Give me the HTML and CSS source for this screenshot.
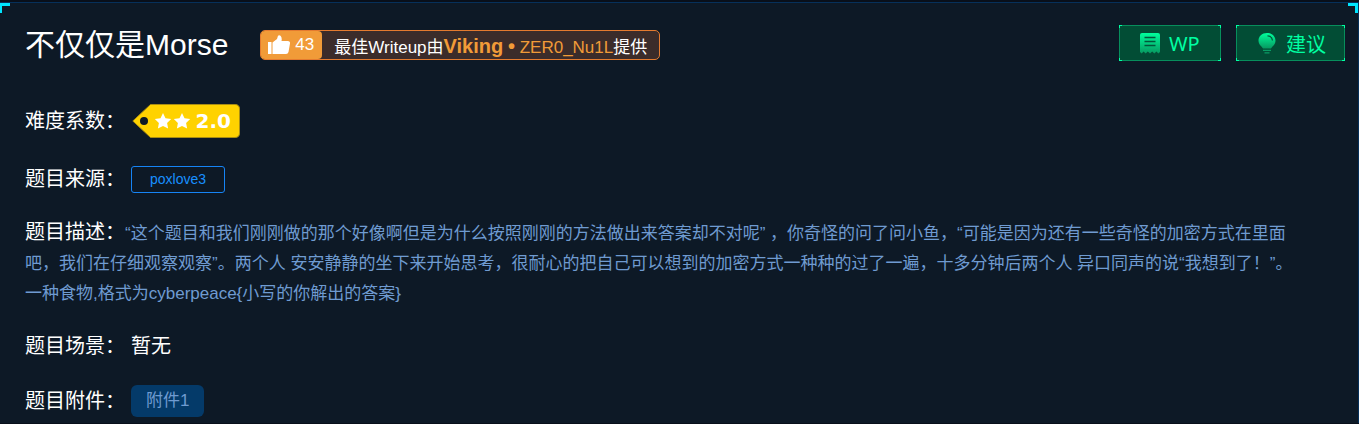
FILE: index.html
```
<!DOCTYPE html>
<html lang="zh-CN">
<head>
  <meta charset="UTF-8">
  <meta name="viewport" content="width=device-width, initial-scale=1.0">
  <title>不仅仅是Morse</title>
  <link rel="stylesheet" href="styles.css">
</head>
<body>
  <main class="panel">
    <header class="panel-header">
      <h1 class="title">不仅仅是Morse</h1>
      <div class="writeup">
        <button class="like" type="button">
          <svg class="like-icon" viewBox="0 0 22 20" aria-hidden="true">
            <path d="M0 7h3.500v12H0z"/>
            <path d="M4.500 7.500L9 4L10 .8Q11.200 -.4 12.500 .8Q14.300 3 13.500 6H20Q22.300 6.300 22 8.500L20.500 17Q20 19 18 19H4.500z"/>
          </svg>
          43
        </button>
        <span class="writeup-text">最佳Writeup由<strong>Viking</strong> <span class="team"><b>•</b> ZER0_Nu1L</span>提供</span>
      </div>
      <div class="actions">
        <button class="action" type="button">
          <svg class="action-icon" viewBox="0 0 20 22" aria-hidden="true">
            <defs>
              <linearGradient id="green" x1="0" y1="0" x2="0" y2="1">
                <stop offset="0" stop-color="#00ff9c"/>
                <stop offset="1" stop-color="#079860"/>
              </linearGradient>
            </defs>
            <path fill="url(#green)" d="M2 1H18Q20 1 20 3V20L18.300 21.500L16.500 19.500L14.300 21.500L12.200 19.500L10 21.500L7.800 19.500L5.700 21.500L3.500 19.500L1.700 21.500L0 20V3Q0 1 2 1z"/>
            <path stroke="#02553a" stroke-width="1.300" d="M4.500 5.500H15.500M4.500 9.500H15.500M4.500 13.500H15.500"/>
          </svg>
          WP
        </button>
        <button class="action" type="button">
          <svg class="action-icon" viewBox="0 0 20 22" aria-hidden="true">
            <path fill="url(#green)" d="M10 1C15 1 18.500 4.500 18.500 8.500C18.500 12.500 16 13.500 14 16.500H6C4 13.500 1.500 12.500 1.500 8.500C1.500 4.500 5 1 10 1z"/>
            <path stroke="#02553a" stroke-width="1.300" fill="none" d="M10.500 3.800Q15 4 15.500 8.500"/>
            <path stroke="#0a9c65" stroke-width="1.300" d="M6 18.300H14M7.500 20.800H12.500"/>
          </svg>
          建议
        </button>
      </div>
    </header>

    <div class="row row-level">
      <span class="label">难度系数：</span>
      <span class="level">
        <svg class="level-tag" viewBox="0 0 109 34" aria-hidden="true">
          <path fill="#ffd200" stroke="#a98d12" d="M19.500 .5H104Q108.500 .5 108.500 5V29Q108.500 33.500 104 33.500H19.500L1.800 17z"/>
          <circle cx="13" cy="17" r="4" fill="#0d1926"/>
          <path id="star" fill="#fff" d="M32 9l2.500 5.200 5.700.8-4.100 4 1 5.600-5.100-2.700-5.100 2.700 1-5.600-4.100-4 5.700-.8z"/>
          <use href="#star" x="19"/>
        </svg>
        <span class="level-value">2.0</span>
      </span>
    </div>

    <div class="row row-source">
      <span class="label">题目来源：</span>
      <a class="source" href="#">poxlove3</a>
    </div>

    <p class="description"><span class="label">题目描述：</span>“这个题目和我们刚刚做的那个好像啊但是为什么按照刚刚的方法做出来答案却不对呢” ，你奇怪的问了问小鱼，“可能是因为还有一些奇怪的加密方式在里面吧，我们在仔细观察观察”。两个人 安安静静的坐下来开始思考，很耐心的把自己可以想到的加密方式一种种的过了一遍，十多分钟后两个人 异口同声的说“我想到了！”。<br>一种食物,格式为cyberpeace{小写的你解出的答案}</p>

    <div class="row row-scene">
      <span class="label">题目场景：</span>
      <span class="scene">暂无</span>
    </div>

    <div class="row row-file">
      <span class="label">题目附件：</span>
      <a class="file" href="#">附件1</a>
    </div>
  </main>
</body>
</html>
```
FILE: styles.css
```
:root {
  --bg: #0d1926;
  --line: #06305a;
  --cyan: #00e5ff;
  --green: #00ffa2;
  --green-bg: #024d35;
  --green-line: #078e5c;
  --orange: #f19b38;
  --text: #fff;
  --text-blue: #6f9bd1;
}
*,
*::before,
*::after {
  box-sizing: border-box;
}
body {
  margin: 0;
  padding-top: 2px;
  background: #080f1a;
  color: var(--text);
  font-family: "Liberation Sans", "Noto Sans CJK SC", sans-serif;
  font-size: 17px;
}
button {
  font: inherit;
  cursor: pointer;
}
a {
  text-decoration: none;
}
.panel {
  position: relative;
  padding: 22px 13px 6px 25px;
  background: var(--bg);
  border-top: 1px solid var(--line);
  border-right: 1px solid var(--line);
}
/* cyan corners */
.panel::before,
.panel::after {
  content: "";
  position: absolute;
  top: 0;
  width: 10px;
  height: 10px;
  border-top: 3px solid var(--cyan);
}
.panel::before {
  left: 0;
  border-left: 2px solid var(--cyan);
}
.panel::after {
  right: 0;
  border-right: 3px solid var(--cyan);
}
.panel-header {
  display: flex;
  align-items: center;
}
.title {
  margin: 0 32px 0 0;
  font-size: 30px;
  font-weight: 400;
  line-height: 40px;
}
.writeup {
  display: flex;
  height: 30px;
  background: #3b2c2a;
  border: 1px solid #e57b2f;
  border-radius: 5px;
}
.like {
  display: flex;
  align-items: center;
  gap: 5px;
  padding: 0 8px 0 7px;
  background: var(--orange);
  border: none;
  border-radius: 4px;
  color: var(--text);
}
.like-icon {
  width: 22px;
  height: 20px;
  fill: #fff;
}
.writeup-text {
  padding: 0 12px;
  line-height: 30px;
}
.writeup-text strong {
  color: var(--orange);
  font-size: 20px;
}
.team {
  color: var(--orange);
}
.team b {
  font-size: 20px;
}
.actions {
  display: flex;
  align-self: flex-start;
  gap: 15px;
  margin-left: auto;
}
.action {
  display: flex;
  align-items: center;
  gap: 9px;
  height: 36px;
  min-width: 102px;
  padding: 0 19px 0 21px;
  color: var(--green);
  font-family: "Noto Sans", "Noto Sans CJK SC", sans-serif;
  font-size: 20px;
  /* bright corner ticks over a dim border */
  background:
    linear-gradient(var(--green) 0 0) 0 0 / 3px 1px,
    linear-gradient(var(--green) 0 0) 0 0 / 1px 3px,
    linear-gradient(var(--green) 0 0) 100% 0 / 3px 1px,
    linear-gradient(var(--green) 0 0) 100% 0 / 1px 3px,
    linear-gradient(var(--green) 0 0) 0 100% / 3px 1px,
    linear-gradient(var(--green) 0 0) 0 100% / 1px 3px,
    linear-gradient(var(--green) 0 0) 100% 100% / 3px 1px,
    linear-gradient(var(--green) 0 0) 100% 100% / 1px 3px,
    linear-gradient(var(--green-line) 0 0) 0 0 / 100% 1px,
    linear-gradient(var(--green-line) 0 0) 0 100% / 100% 1px,
    linear-gradient(var(--green-line) 0 0) 0 0 / 1px 100%,
    linear-gradient(var(--green-line) 0 0) 100% 0 / 1px 100%,
    var(--green-bg);
  background-repeat: no-repeat;
  border: none;
}
.action-icon {
  width: 20px;
  height: 22px;
  fill: none;
}
.row {
  display: flex;
  align-items: center;
  gap: 6px;
}
.label {
  color: var(--text);
  font-size: 20px;
  line-height: 30px;
}
.row-level {
  margin-top: 39px;
}
.level {
  display: grid;
  align-items: center;
}
.level-tag,
.level-value {
  grid-area: 1 / 1;
}
.level-tag {
  width: 109px;
  height: 34px;
}
.level-value {
  justify-self: end;
  padding-right: 9px;
  font-family: "DejaVu Sans", sans-serif;
  font-size: 20px;
  font-weight: 700;
  line-height: 34px;
}
.row-source {
  margin-top: 26px;
}
.source {
  padding: 0 18px;
  border: 1px solid #1684f5;
  border-radius: 3px;
  color: #1890ff;
  font-size: 14px;
  line-height: 25px;
}
.description {
  margin: 23px 50px 0 0;
  color: var(--text-blue);
  line-height: 30px;
}
.row-scene {
  margin-top: 22px;
}
.scene {
  font-size: 20px;
  line-height: 30px;
}
.row-file {
  margin-top: 24px;
}
.file {
  padding: 0 15px;
  background: #043a69;
  border-radius: 6px;
  color: var(--text-blue);
  line-height: 32px;
}
```
